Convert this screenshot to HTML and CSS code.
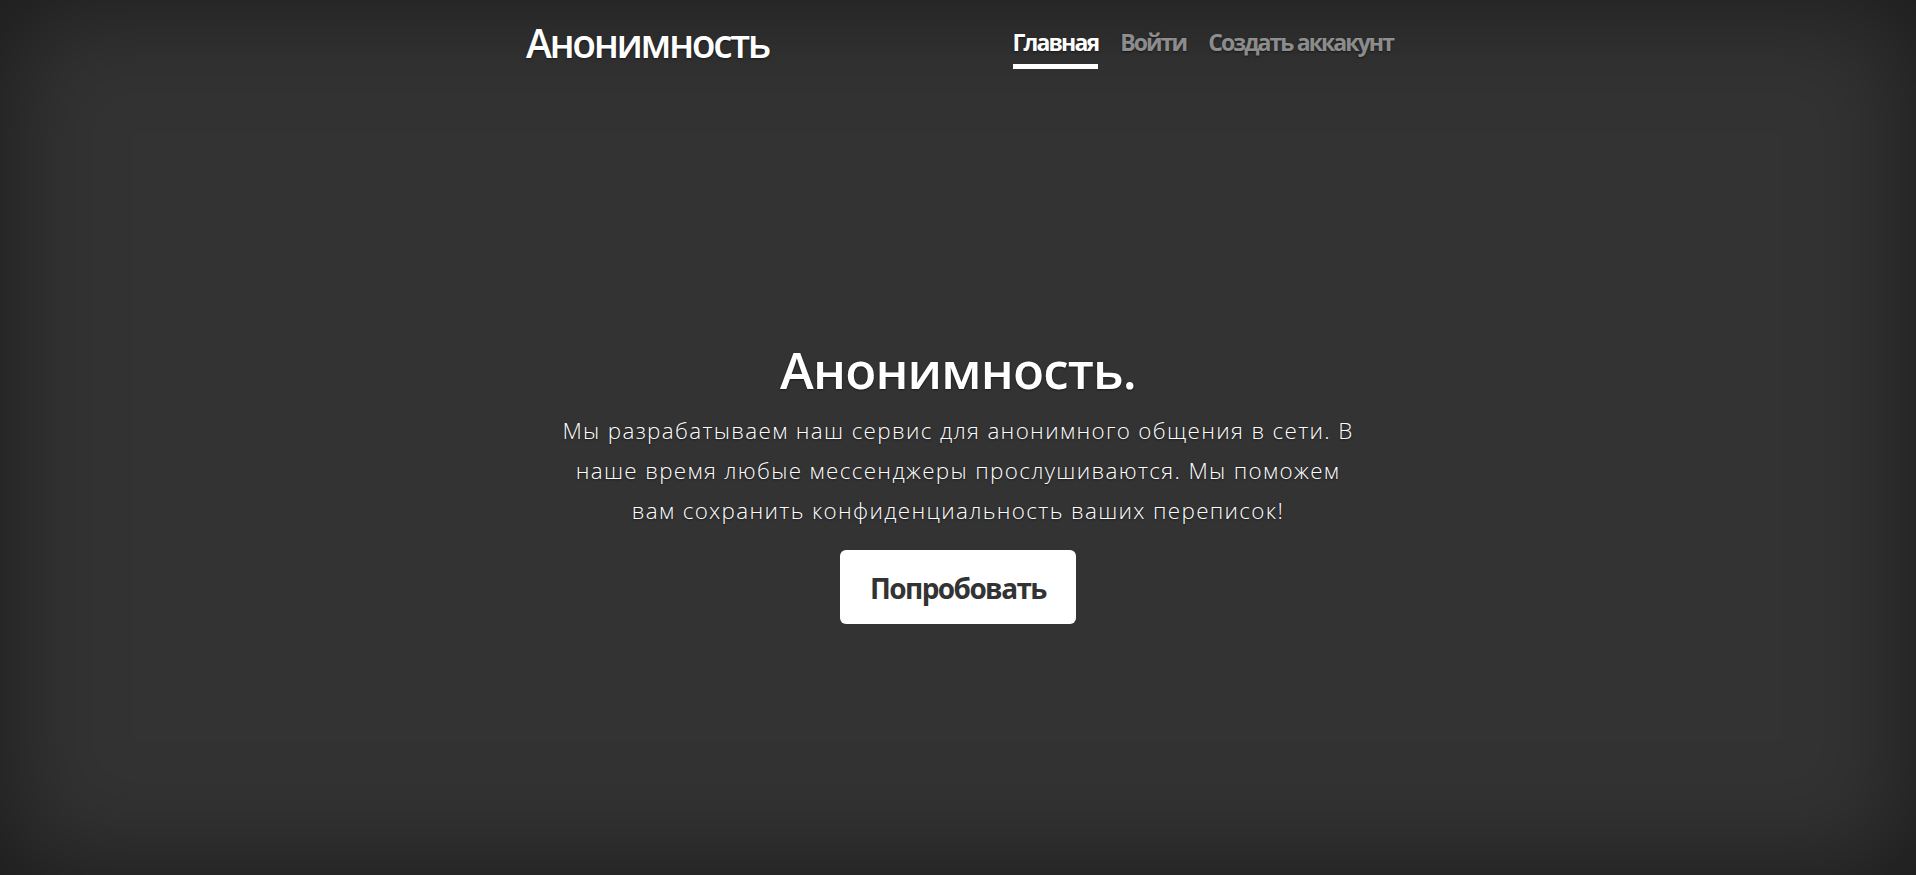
FILE: index.html
```html
<!DOCTYPE html>
<html lang="ru">
<head>
<meta charset="utf-8">
<title>Анонимность</title>
<link rel="stylesheet" href="styles.css">
</head>
<body>
<div class="cover">
  <header class="masthead">
    <h3 class="brand">Анонимность</h3>
    <nav class="nav">
      <a class="nav-link active" href="#">Главная</a>
      <a class="nav-link" href="#">Войти</a>
      <a class="nav-link" href="#">Создать аккакунт</a>
    </nav>
  </header>
  <main class="inner">
    <h1 class="heading">Анонимность.</h1>
    <p class="lead">Мы разрабатываем наш сервис для анонимного общения в сети. В<br>наше время любые мессенджеры прослушиваются. Мы поможем<br>вам сохранить конфиденциальность ваших переписок!</p>
    <div class="actions"><a class="btn" href="#">Попробовать</a></div>
  </main>
</div>
</body>
</html>
```
FILE: styles.css
```css
html, body {
  margin: 0;
  height: 100%;
}
body {
  background: #333;
  color: #fff;
  font-family: "Open Sans", "Noto Sans", sans-serif;
  box-shadow: inset 0 0 112px rgba(0, 0, 0, 0.5);
  text-shadow: 0 1px 2px rgba(0, 0, 0, 0.5);
  box-sizing: border-box;
}
.cover {
  width: 870px;
  margin: 0 auto;
  height: 100%;
  display: flex;
  flex-direction: column;
}
.masthead {
  display: flex;
  justify-content: space-between;
  align-items: flex-start;
  padding-top: 19px;
}
.brand {
  margin: 0 0 0 3px;
  font-size: 39px;
  line-height: 47px;
  font-weight: 600;
  letter-spacing: -2.4px;
}
.nav {
  display: flex;
  gap: 22px;
  margin-top: 7px;
}
.nav-link {
  font-size: 23px;
  line-height: 32px;
  font-weight: 700;
  letter-spacing: -1.9px;
  color: rgba(255, 255, 255, 0.5);
  text-decoration: none;
  padding-bottom: 5.5px;
  border-bottom: 5.6px solid transparent;
}
.nav-link.active {
  color: #fff;
  border-bottom-color: #fff;
}
.inner {
  flex: 1;
  display: flex;
  flex-direction: column;
  justify-content: center;
  align-items: center;
  padding-top: 19px;
  text-align: center;
}
.heading {
  margin: 0;
  font-size: 51px;
  line-height: 60px;
  font-weight: 600;
  letter-spacing: -0.85px;
}
.lead {
  margin: 12px 0 0;
  font-size: 22.4px;
  line-height: 40px;
  font-weight: 300;
  letter-spacing: 1.35px;
}
.actions {
  margin-top: 18.5px;
}
.btn {
  display: inline-block;
  background: #fff;
  color: #333;
  text-shadow: none;
  text-decoration: none;
  font-weight: 700;
  font-size: 28px;
  line-height: 38px;
  letter-spacing: -1.6px;
  padding: 19px 30px 17px;
  border-radius: 6px;
}
```
